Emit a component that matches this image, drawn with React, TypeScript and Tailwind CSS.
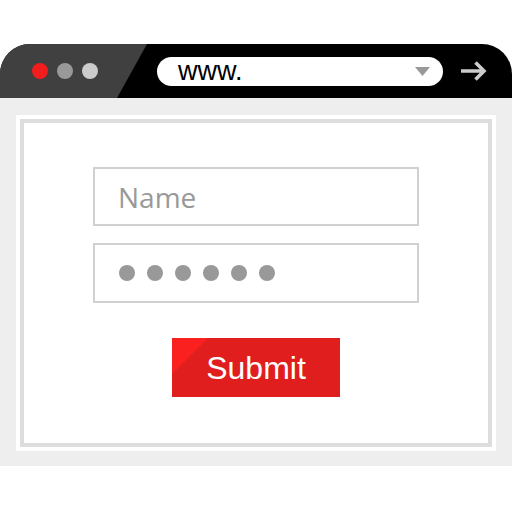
export default function App() {
  return (
    <div className="h-[512px] w-[512px] bg-white pt-[44px] font-['Liberation_Sans',Arial,sans-serif]">
      <header className="flex h-[54px] items-center overflow-hidden rounded-t-[30px] bg-black">
        <div className="flex h-full w-[147px] flex-none items-center gap-[9px] bg-[#404040] pl-[32px] [clip-path:polygon(0_0,147px_0,117px_100%,0_100%)]">
          <span className="h-4 w-4 rounded-full bg-[#f21d1d]" />
          <span className="h-4 w-4 rounded-full bg-[#999999]" />
          <span className="h-4 w-4 rounded-full bg-[#cccccc]" />
        </div>
        <div className="ml-[10px] flex h-[29px] w-[286px] items-center rounded-full bg-white pl-[21px] pr-[13px]">
          <span className="text-[27px] leading-none text-black">www.</span>
          <svg className="ml-auto" width="15" height="9" viewBox="0 0 15 9">
            <polygon points="0,0 15,0 7.5,9" fill="#999999" />
          </svg>
        </div>
        <svg className="ml-[17px]" width="27" height="20" viewBox="0 0 27 20">
          <path d="M1 10 H24 M15.5 1.5 L24 10 L15.5 18.5" fill="none" stroke="#cccccc" strokeWidth="3.6" />
        </svg>
      </header>

      <main className="h-[368px] bg-[#eeeeee] px-[16px] pt-[17px]">
        <div className="h-[336px] bg-white p-[4px]">
          <div className="flex h-full flex-col items-center border-[4px] border-[#dddddd] pt-[44px]">
            <div className="flex h-[59px] w-[326px] items-center border-2 border-[#d0d0d0] pl-[23px]">
              <span className="font-['Open_Sans',sans-serif] text-[28px] leading-none text-[#999999]">Name</span>
            </div>
            <div className="mt-[17px] flex h-[60px] w-[326px] items-center gap-[12px] border-2 border-[#d0d0d0] pl-[24px]">
              {[0, 1, 2, 3, 4, 5].map((i) => (
                <span key={i} className="h-4 w-4 rounded-full bg-[#999999]" />
              ))}
            </div>
            <button className="relative mt-[35px] flex h-[59px] w-[168px] items-center justify-center overflow-hidden bg-[#e01e1e] text-[32px] text-white">
              <span className="absolute left-0 top-0 h-[36px] w-[36px] bg-[#fa2020] [clip-path:polygon(0_0,100%_0,0_100%)]" />
              <span className="relative">Submit</span>
            </button>
          </div>
        </div>
      </main>
    </div>
  );
}
